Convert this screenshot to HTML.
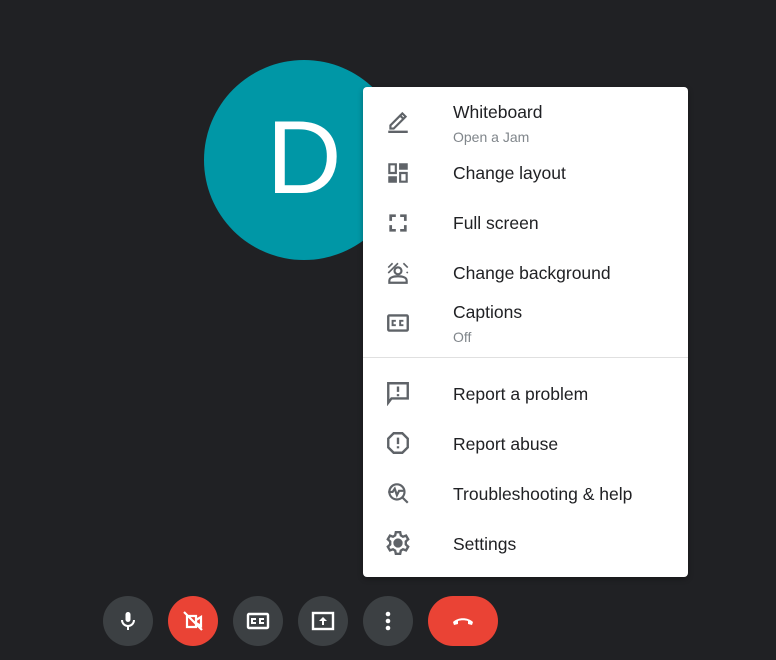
<!DOCTYPE html>
<html><head><style>
body{margin:0;width:776px;height:660px;background:#202124;position:relative;overflow:hidden;font-family:"Liberation Sans",Roboto,sans-serif}
.av{position:absolute;left:204px;top:60px;width:200px;height:200px;border-radius:50%;background:#0097a6;color:#fff;font-size:104px;text-align:center;line-height:196px}
.menu{position:absolute;left:363px;top:87px;width:325px;height:490px;background:#fff;border-radius:4px;box-shadow:0 2px 6px rgba(0,0,0,.3)}
.it{position:absolute;left:0;width:325px}
.it svg{position:absolute;left:22px;width:26px;height:26px}
.t{position:absolute;left:90px;font-size:17.5px;color:#202124;white-space:nowrap}
.s{position:absolute;left:90px;font-size:14px;color:#80868b}
.hr{position:absolute;left:0;top:270px;width:325px;height:1px;background:#e0e0e0}
.b{position:absolute;top:596px;width:50px;height:50px;border-radius:25px;background:#3c4043}
.b svg{position:absolute;left:13px;top:13px;width:24px;height:24px}
</style></head><body>
<div class="av">D</div>
<div class="menu">
<div class="it"><svg style="top:21px" viewBox="0 0 24 24" fill="none" stroke="#5f6368" stroke-width="2"><path d="M5 16l9-9 3 3-9 9H5z M14 7l2-2 3 3-2 2"/><path d="M3 22h18" stroke-width="2.2"/></svg>
<div class="t" style="top:15px">Whiteboard</div><div class="s" style="top:42px">Open a Jam</div></div>
<div class="it"><svg style="top:73px" viewBox="0 0 24 24" fill="#5f6368"><path d="M3 3h8v10H3zM5 5v6h4V5zM13 3h8v6h-8zM3 15h8v6H3zM13 11h8v10h-8zM15 13v6h4v-6z"/></svg>
<div class="t" style="top:76px">Change layout</div></div>
<div class="it"><svg style="top:123px" viewBox="0 0 24 24" fill="#5f6368"><path d="M4 4h6v2.5H6.5V10H4zM14 4h6v6h-2.5V6.5H14zM4 14h2.5v3.5H10V20H4zM17.5 14H20v6h-6v-2.5h3.5z"/></svg>
<div class="t" style="top:126px">Full screen</div></div>
<div class="it"><svg style="top:173px" viewBox="0 0 24 24" fill="none" stroke="#5f6368" stroke-width="2"><circle cx="12" cy="10" r="3.2"/><path d="M4 21v-2c0-3 4-4 8-4s8 1 8 4v2z"/><path d="M3 7l4-4M3 12l9-9M17 3l4 4M20 12l1-1" stroke-width="1.5"/></svg>
<div class="t" style="top:176px">Change background</div></div>
<div class="it"><svg style="top:223px" viewBox="0 0 24 24" fill="none" stroke="#5f6368" stroke-width="2.2"><rect x="3" y="5" width="18" height="14" rx="1"/><path d="M10 10H7v4h3M17 10h-3v4h3" stroke-width="1.8"/></svg>
<div class="t" style="top:215px">Captions</div><div class="s" style="top:242px">Off</div></div>
<div class="hr"></div>
<div class="it"><svg style="top:293px" viewBox="0 0 24 24" fill="none" stroke="#5f6368" stroke-width="2.2"><path d="M3 3h18v14H6l-3 4z"/><path d="M12 6v5M12 13v2"/></svg>
<div class="t" style="top:297px">Report a problem</div></div>
<div class="it"><svg style="top:343px" viewBox="0 0 24 24" fill="none" stroke="#5f6368" stroke-width="2.2"><path d="M8 3h8l5 5v8l-5 5H8l-5-5V8z"/><path d="M12 7v6M12 15v2"/></svg>
<div class="t" style="top:347px">Report abuse</div></div>
<div class="it"><svg style="top:393px" viewBox="0 0 24 24" fill="none" stroke="#5f6368" stroke-width="2"><circle cx="11" cy="11" r="7"/><path d="M16 16l5 5M3 11h4l2-3 2 6 2-4h4"/></svg>
<div class="t" style="top:397px">Troubleshooting &amp; help</div></div>
<div class="it"><svg style="top:443px" viewBox="0 0 24 24" fill="none" stroke="#5f6368" stroke-width="2.2"><path d="M10 2h4l.6 3 2 1.2 2.8-1 2 3.4-2.2 2v2.8l2.2 2-2 3.4-2.8-1-2 1.2-.6 3h-4l-.6-3-2-1.2-2.8 1-2-3.4 2.2-2v-2.8l-2.2-2 2-3.4 2.8 1 2-1.2z"/><circle cx="12" cy="12" r="3.2" fill="#5f6368"/></svg>
<div class="t" style="top:447px">Settings</div></div>
</div>
<div class="b" style="left:103px"><svg viewBox="0 0 24 24" fill="#fff"><rect x="9.5" y="3" width="5" height="10" rx="2.5"/><path d="M6 11a6 6 0 0012 0" fill="none" stroke="#fff" stroke-width="2"/><rect x="11" y="16" width="2" height="5"/></svg></div>
<div class="b" style="left:168px;background:#ea4335"><svg viewBox="0 0 24 24" fill="none" stroke="#fff" stroke-width="2.2"><path d="M15 7H6v11h9zM15 11l5-3v9l-5-3M3 3l18 18"/></svg></div>
<div class="b" style="left:233px"><svg viewBox="0 0 24 24" fill="none" stroke="#fff" stroke-width="2.4"><rect x="2" y="5" width="20" height="14" rx="1"/><path d="M10 10H6v4h4M18 10h-4v4h4" stroke-width="2"/></svg></div>
<div class="b" style="left:298px"><svg viewBox="0 0 24 24"><rect x="2" y="4" width="20" height="16" fill="none" stroke="#fff" stroke-width="2.4"/><path d="M12 8l-4 4h3v4h2v-4h3z" fill="#fff"/></svg></div>
<div class="b" style="left:363px"><svg viewBox="0 0 24 24" fill="#fff"><circle cx="12" cy="5" r="2.3"/><circle cx="12" cy="12" r="2.3"/><circle cx="12" cy="19" r="2.3"/></svg></div>
<div class="b" style="left:428px;width:70px;background:#ea4335"><svg style="left:23px" viewBox="0 0 24 24" fill="#fff"><path d="M2 13c5-5 15-5 20 0l-1 3-4-1v-3c-3-1-7-1-10 0v3l-4 1z"/></svg></div>
</body></html>
